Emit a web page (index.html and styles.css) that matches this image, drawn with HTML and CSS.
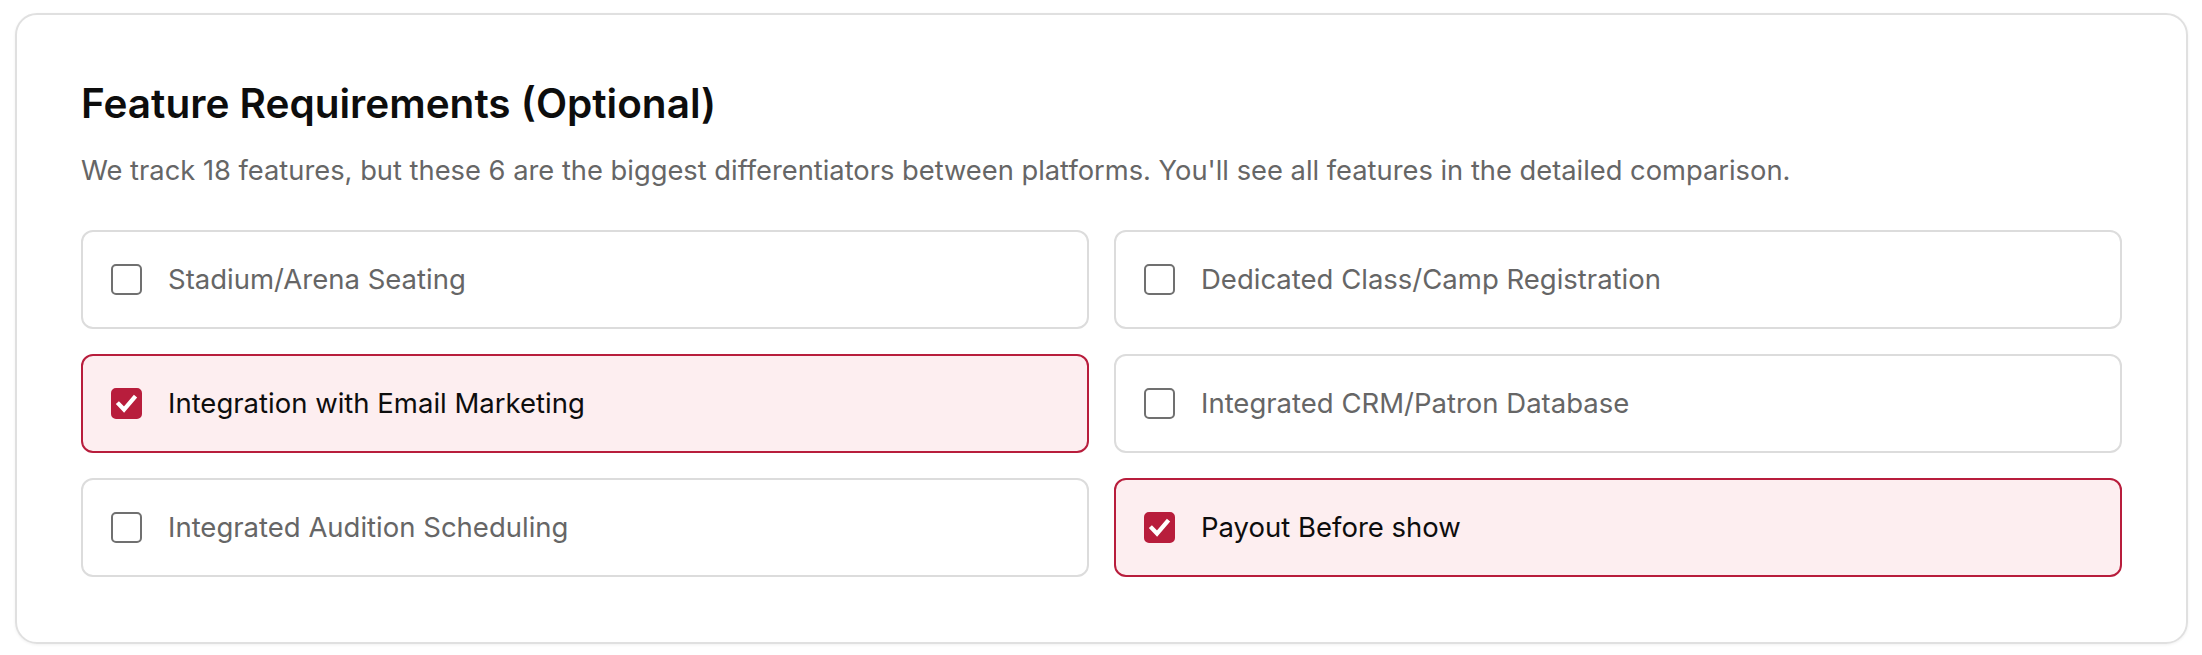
FILE: index.html
```html
<!DOCTYPE html>
<html lang="en">
<head>
  <meta charset="UTF-8" />
  <meta name="viewport" content="width=device-width, initial-scale=1.0"/>
  <title>Feature Requirements</title>
  <link rel="stylesheet" href="styles.css">
</head>

<body>
  <div class="card">
    <h2 class="card-title">Feature Requirements (Optional)</h2>
    <p class="card-desc">We track 18 features, but these 6 are the biggest differentiators between platforms. You'll see all features in the detailed comparison.</p>

    <div class="feature-grid">
      <label class="feature">
        <span class="box"></span>
        <span class="label">Stadium/Arena Seating</span>
      </label>
      <label class="feature">
        <span class="box"></span>
        <span class="label">Dedicated Class/Camp Registration</span>
      </label>
      <label class="feature checked">
        <span class="box">
          <svg viewBox="0 0 24 24"><path d="M5.2 12.6l4.6 4.8 9-10.6" /></svg>
        </span>
        <span class="label">Integration with Email Marketing</span>
      </label>
      <label class="feature">
        <span class="box"></span>
        <span class="label">Integrated CRM/Patron Database</span>
      </label>
      <label class="feature">
        <span class="box"></span>
        <span class="label">Integrated Audition Scheduling</span>
      </label>
      <label class="feature checked">
        <span class="box">
          <svg viewBox="0 0 24 24"><path d="M5.2 12.6l4.6 4.8 9-10.6" /></svg>
        </span>
        <span class="label">Payout Before show</span>
      </label>
    </div>
  </div>
</body>
</html>
```

FILE: styles.css
```css
body {
  margin: 0;
  padding: 13px 14px 12px 15px;
  font-family: Inter, "Noto Sans", sans-serif;
  background-color: #ffffff;
  color: #111;
}

.card {
  border: 2px solid #e0e0e0;
  border-radius: 22px;
  padding: 65px 64px 65px 64px;
  box-shadow: 0 1px 3px rgba(0,0,0,0.06);
}

.card-title {
  margin: 0;
  font-size: 40.5px;
  line-height: 1.2;
  font-weight: 600;
  letter-spacing: 0;
  color: #0d0d0d;
}

.card-desc {
  margin: 22px 0 0 0;
  font-size: 27.3px;
  line-height: 1.5;
  color: #666;
}

.feature-grid {
  display: grid;
  grid-template-columns: 1fr 1fr;
  gap: 25px 25px;
  margin-top: 38px;
}

.feature {
  display: flex;
  align-items: center;
  gap: 26px;
  padding: 30px 28px;
  border: 2px solid #dcdcdc;
  border-radius: 12px;
  background-color: #fff;
  cursor: pointer;
}

.feature .label {
  font-size: 27.5px;
  line-height: 35px;
  color: #666;
}

.box {
  width: 31px;
  height: 31px;
  box-sizing: border-box;
  border: 2px solid #707070;
  border-radius: 5px;
  flex-shrink: 0;
  display: flex;
  align-items: center;
  justify-content: center;
}

.feature.checked {
  border-color: #b81d3c;
  background-color: #fdeef0;
}

.feature.checked .label {
  color: #0d0d0d;
}

.feature.checked .box {
  border-color: #b81d3c;
  background-color: #b81d3c;
}

.box svg {
  width: 29px;
  height: 29px;
  fill: none;
  stroke: #fff;
  stroke-width: 3.8;
  stroke-linecap: square;
  stroke-linejoin: miter;
}
```
